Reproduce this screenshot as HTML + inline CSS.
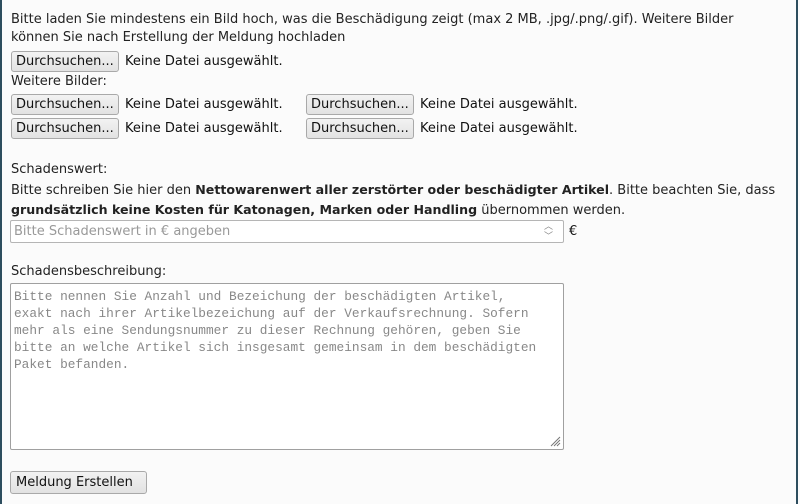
<!DOCTYPE html>
<html><head><meta charset="utf-8"><style>
html,body{margin:0;padding:0;width:800px;height:504px;overflow:hidden;background:#fbfbfb;}
body{position:relative;font-family:"DejaVu Sans",sans-serif;font-size:13px;color:#222;}
.bl{position:absolute;left:0;top:0;width:2px;height:504px;background:#2d4d5e;}
.br{position:absolute;right:2px;top:0;width:2px;height:504px;background:#2d4d5e;}
.t{position:absolute;left:11px;white-space:nowrap;line-height:18px;}
.btn{position:absolute;height:21px;box-sizing:border-box;border:1px solid #a9a9a9;border-radius:3px;background:linear-gradient(#f2f2f2,#e2e2e2);font-size:13px;line-height:19px;padding:0 4px;color:#111;white-space:nowrap;overflow:hidden;}
.lab{position:absolute;white-space:nowrap;font-size:13px;line-height:21px;color:#111;}
.inp{position:absolute;left:10px;top:220px;width:554px;height:23px;box-sizing:border-box;border:1px solid #b5b5b5;border-radius:2px;background:#fff;color:#999;font-size:13px;line-height:21px;padding-left:3px;}
.ta{position:absolute;left:10px;top:283px;width:554px;height:167px;box-sizing:border-box;border:1px solid #a0a0a0;border-radius:2px;background:#fff;color:#888;font-family:"Liberation Mono",monospace;font-size:12.8px;line-height:17px;padding:4px 3px;white-space:pre;}
b{font-weight:bold;font-size:12.6px;}
</style></head><body>
<div class="bl"></div><div class="br"></div>
<div class="t" style="top:11px">Bitte laden Sie mindestens ein Bild hoch, was die Beschädigung zeigt (max 2 MB, .jpg/.png/.gif). Weitere Bilder</div>
<div class="t" style="top:29px">können Sie nach Erstellung der Meldung hochladen</div>
<div class="btn" style="left:11px;top:51px;width:108px">Durchsuchen...</div><div class="lab" style="left:125px;top:51px">Keine Datei ausgewählt.</div>
<div class="t" style="top:73px">Weitere Bilder:</div>
<div class="btn" style="left:11px;top:94px;width:108px">Durchsuchen...</div><div class="lab" style="left:125px;top:94px">Keine Datei ausgewählt.</div>
<div class="btn" style="left:306px;top:94px;width:108px">Durchsuchen...</div><div class="lab" style="left:420px;top:94px">Keine Datei ausgewählt.</div>
<div class="btn" style="left:11px;top:118px;width:108px">Durchsuchen...</div><div class="lab" style="left:125px;top:118px">Keine Datei ausgewählt.</div>
<div class="btn" style="left:306px;top:118px;width:108px">Durchsuchen...</div><div class="lab" style="left:420px;top:118px">Keine Datei ausgewählt.</div>
<div class="t" style="top:161px">Schadenswert:</div>
<div class="t" style="top:181px">Bitte schreiben Sie hier den <b>Nettowarenwert aller zerstörter oder beschädigter Artikel</b>. Bitte beachten Sie, dass</div>
<div class="t" style="top:201px"><b>grundsätzlich keine Kosten für Katonagen, Marken oder Handling</b> übernommen werden.</div>
<div class="inp">Bitte Schadenswert in € angeben<span style="position:absolute;right:10px;top:0;color:#888;font-size:9px;line-height:10px;padding-top:1px">︿<br>﹀</span></div>
<div class="lab" style="left:569px;top:221px">€</div>
<div class="t" style="top:263px">Schadensbeschreibung:</div>
<div class="ta">Bitte nennen Sie Anzahl und Bezeichung der beschädigten Artikel,
exakt nach ihrer Artikelbezeichung auf der Verkaufsrechnung. Sofern
mehr als eine Sendungsnummer zu dieser Rechnung gehören, geben Sie
bitte an welche Artikel sich insgesamt gemeinsam in dem beschädigten
Paket befanden.<svg style="position:absolute;right:2px;bottom:2px" width="12" height="12"><path d="M11 2L2 11M11 5L5 11M11 8L8 11" stroke="#777" stroke-width="1"/></svg></div>
<div class="btn" style="left:10px;top:471px;width:137px;height:23px;line-height:21px;padding-left:5px">Meldung Erstellen</div>
</body></html>
